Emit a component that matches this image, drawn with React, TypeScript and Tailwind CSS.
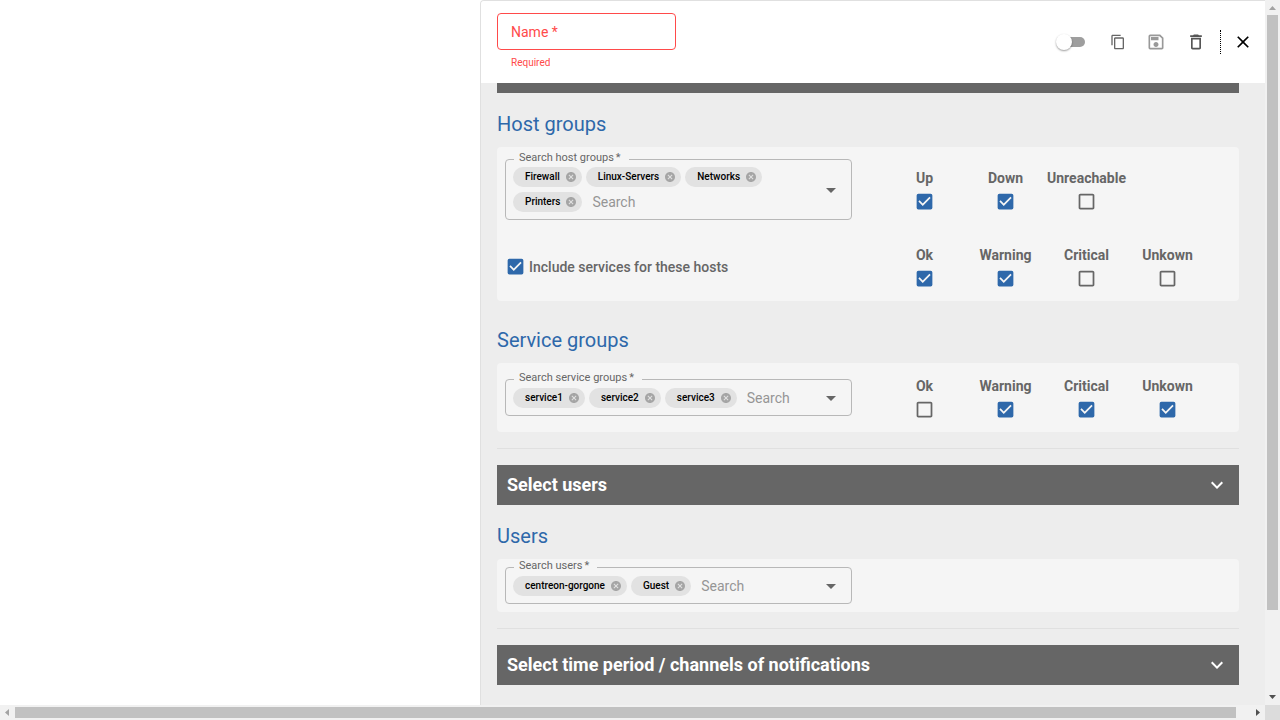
import { useId, useState } from 'react';
import type { ReactNode } from 'react';
import {
  MdArrowDropDown,
  MdCancel,
  MdCheckBox,
  MdCheckBoxOutlineBlank,
  MdClose,
  MdContentCopy,
  MdDeleteOutline,
  MdExpandMore,
  MdOutlineSave,
} from 'react-icons/md';

interface Option {
  label: string;
  checked: boolean;
}

function CheckIcon({ id, defaultChecked }: { id: string; defaultChecked: boolean }) {
  return (
    <span className="grid size-[21px] shrink-0">
      <input
        id={id}
        type="checkbox"
        defaultChecked={defaultChecked}
        className="peer col-start-1 row-start-1 size-[21px] cursor-pointer appearance-none"
      />
      <MdCheckBoxOutlineBlank
        size={21}
        className="pointer-events-none col-start-1 row-start-1 text-[#666666] peer-checked:hidden"
      />
      <MdCheckBox
        size={21}
        className="pointer-events-none col-start-1 row-start-1 hidden text-[#2e68aa] peer-checked:block"
      />
    </span>
  );
}

function StatusGroup({ options }: { options: Option[] }) {
  const id = useId();
  return (
    <div className="grid grid-cols-[repeat(4,81px)] justify-start">
      {options.map((option, index) => (
        <div key={option.label} className="flex flex-col items-center gap-[2px]">
          <label
            htmlFor={`${id}-${index}`}
            className="text-sm leading-[22px] font-bold whitespace-nowrap text-[#666666]"
          >
            {option.label}
          </label>
          <CheckIcon id={`${id}-${index}`} defaultChecked={option.checked} />
        </div>
      ))}
    </div>
  );
}

function Chip({ label, onRemove }: { label: string; onRemove: () => void }) {
  return (
    <span className="flex h-5 items-center gap-[5px] rounded-full bg-[#e2e2e2] pr-[5px] pl-3 text-[10px] leading-5 font-medium text-black">
      {label}
      <button type="button" aria-label={`Remove ${label}`} onClick={onRemove}>
        <MdCancel size={12} className="text-[#a5a5a5]" />
      </button>
    </span>
  );
}

function SearchField({ label, initial }: { label: string; initial: string[] }) {
  const id = useId();
  const [items, setItems] = useState(initial);
  return (
    <div className="relative flex min-h-[37px] w-[347px] items-center rounded border border-[#b8b8b8] py-[7px] pr-2 pl-[7px]">
      <label
        htmlFor={id}
        className="absolute -top-[9px] left-2 flex gap-[2px] bg-[#f5f5f5] pr-2 pl-[5px] text-[11px] leading-[14px] whitespace-nowrap text-[#666666]"
      >
        {label} <span>*</span>
      </label>
      <div className="flex min-w-0 flex-1 flex-wrap gap-x-1 gap-y-[5px]">
        {items.map((item) => (
          <Chip
            key={item}
            label={item}
            onRemove={() => setItems(items.filter((other) => other !== item))}
          />
        ))}
        <input
          id={id}
          type="text"
          placeholder="Search"
          className="h-5 w-0 min-w-[60px] flex-1 bg-transparent px-[6px] text-sm leading-5 text-black outline-none placeholder:text-[#959595]"
        />
      </div>
      <button type="button" aria-label="Open" className="-my-1 text-[#666666]">
        <MdArrowDropDown size={24} />
      </button>
    </div>
  );
}

function SectionBar({ children }: { children: ReactNode }) {
  return (
    <button
      type="button"
      className="flex h-10 w-full shrink-0 items-center justify-between bg-[#666666] pr-[10px] pl-[10px] text-left text-lg font-bold text-white"
    >
      {children}
      <MdExpandMore size={24} />
    </button>
  );
}

function Title({ children }: { children: ReactNode }) {
  return <h2 className="mb-[9px] text-xl leading-7 text-[#2e68aa]">{children}</h2>;
}

function Card({ children }: { children: ReactNode }) {
  return (
    <div className="grid grid-cols-[379px_1fr] items-center gap-y-6 rounded bg-[#f5f5f5] px-2 py-3">
      {children}
    </div>
  );
}

function Header() {
  return (
    <header className="flex h-[82px] shrink-0 items-start justify-between bg-white pt-3 pr-3 pl-4">
      <div className="w-[179px]">
        <input
          id="name"
          type="text"
          aria-label="Name"
          aria-describedby="name-error"
          placeholder="Name *"
          className="block h-[37px] w-full rounded border border-[#ff4a4a] px-[13px] text-sm text-black outline-none placeholder:text-[#ff4a4a]"
        />
        <p id="name-error" className="mt-[5px] px-[14px] text-[10px] leading-4 text-[#ff4a4a]">
          Required
        </p>
      </div>
      <div className="flex h-[58px] items-center">
        <label className="mr-6 flex h-5 w-[30px] items-center">
          <input type="checkbox" role="switch" aria-label="Active" className="peer sr-only" />
          <span className="flex h-[10px] w-[29px] items-center rounded-full bg-gradient-to-r from-transparent from-20% to-[#9e9e9e] to-20% peer-checked:to-[#2e68aa]">
            <span className="size-4 shrink-0 rounded-full bg-white shadow-[0_1px_2px_rgba(0,0,0,0.4)]" />
          </span>
        </label>
        <button type="button" aria-label="Duplicate" className="mr-5 text-[#666666]">
          <MdContentCopy size={16} />
        </button>
        <button type="button" aria-label="Save" className="mr-5 text-[#999999]">
          <MdOutlineSave size={20} />
        </button>
        <button type="button" aria-label="Delete" className="mr-[14px] text-[#555555]">
          <MdDeleteOutline size={20} />
        </button>
        <span className="mr-3 h-6 border-l border-dotted border-black" />
        <button type="button" aria-label="Close" className="text-black">
          <MdClose size={20} />
        </button>
      </div>
    </header>
  );
}

function VerticalScrollbar() {
  return (
    <div className="flex flex-col items-center bg-[#f1f1f1]">
      <svg viewBox="0 0 15 15" className="size-[15px] shrink-0 fill-[#a3a3a3]">
        <path d="M4 10h7L7.5 6z" />
      </svg>
      <div className="w-[11px] flex-[595] bg-[#c1c1c1]" />
      <div className="flex-[80]" />
      <svg viewBox="0 0 15 15" className="size-[15px] shrink-0 fill-[#505050]">
        <path d="M4 5h7L7.500 9z" />
      </svg>
    </div>
  );
}

function HorizontalScrollbar() {
  return (
    <div className="flex items-center bg-[#f1f1f1]">
      <svg viewBox="0 0 15 15" className="size-[15px] shrink-0 fill-[#a3a3a3]">
        <path d="M9 4v7L5 7.500z" />
      </svg>
      <div className="h-[11px] flex-[1221] bg-[#c1c1c1]" />
      <div className="flex-[14]" />
      <svg viewBox="0 0 15 15" className="size-[15px] shrink-0 fill-[#505050]">
        <path d="M6 4v7l4-3.500z" />
      </svg>
    </div>
  );
}

export default function App() {
  return (
    <div className="grid h-screen grid-cols-[1fr_15px] grid-rows-[minmax(0,1fr)_15px] bg-white font-[Roboto,sans-serif]">
      <div className="flex min-w-0 pl-[480px]">
        <main className="flex min-w-0 flex-1 flex-col overflow-hidden rounded-tl border-t border-l border-[#e0e0e0] bg-[#ededed]">
          <Header />
          <div className="flex min-h-0 flex-1 flex-col overflow-hidden pr-[26px] pl-4">
            <div className="h-[10px] shrink-0 bg-[#666666]" />

            <section className="mt-[17px]">
              <Title>Host groups</Title>
              <Card>
                <SearchField
                  label="Search host groups"
                  initial={['Firewall', 'Linux-Servers', 'Networks', 'Printers']}
                />
                <StatusGroup
                  options={[
                    { label: 'Up', checked: true },
                    { label: 'Down', checked: true },
                    { label: 'Unreachable', checked: false },
                  ]}
                />
                <div className="flex items-center gap-[3px]">
                  <CheckIcon id="include-services" defaultChecked />
                  <label
                    htmlFor="include-services"
                    className="text-sm leading-5 font-medium text-[#666666]"
                  >
                    Include services for these hosts
                  </label>
                </div>
                <StatusGroup
                  options={[
                    { label: 'Ok', checked: true },
                    { label: 'Warning', checked: true },
                    { label: 'Critical', checked: false },
                    { label: 'Unkown', checked: false },
                  ]}
                />
              </Card>
            </section>

            <section className="mt-[25px]">
              <Title>Service groups</Title>
              <Card>
                <SearchField
                  label="Search service groups"
                  initial={['service1', 'service2', 'service3']}
                />
                <StatusGroup
                  options={[
                    { label: 'Ok', checked: false },
                    { label: 'Warning', checked: true },
                    { label: 'Critical', checked: true },
                    { label: 'Unkown', checked: true },
                  ]}
                />
              </Card>
            </section>

            <hr className="my-4 border-[#e0e0e0]" />
            <SectionBar>Select users</SectionBar>

            <section className="mt-[17px]">
              <Title>Users</Title>
              <div className="rounded bg-[#f5f5f5] p-2">
                <SearchField label="Search users" initial={['centreon-gorgone', 'Guest']} />
              </div>
            </section>

            <hr className="my-4 border-[#e0e0e0]" />
            <SectionBar>Select time period / channels of notifications</SectionBar>
          </div>
        </main>
      </div>
      <VerticalScrollbar />
      <HorizontalScrollbar />
      <div className="bg-[#dcdcdc]" />
    </div>
  );
}
